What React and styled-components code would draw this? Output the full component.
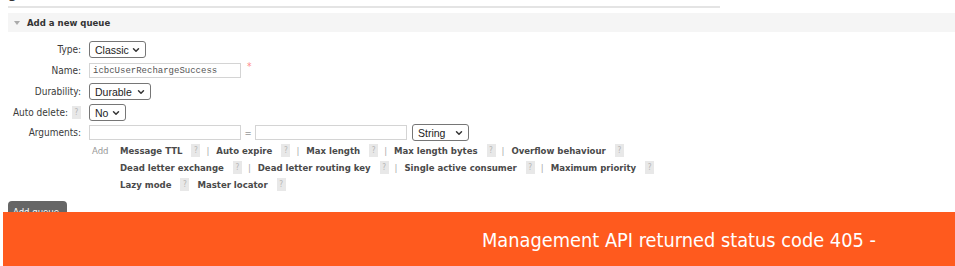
import React from "react";
import styled, { createGlobalStyle } from "styled-components";
import { ChevronDown } from "lucide-react";

const GlobalStyle = createGlobalStyle`
  html, body {
    margin: 0;
    padding: 0;
    background: #fff;
  }
  body {
    font-family: "DejaVu Sans", Verdana, sans-serif;
    font-stretch: condensed;
    font-size: 9.5px;
    color: #444;
    width: 955px;
    height: 266px;
    overflow: hidden;
    position: relative;
  }
`;

const TopStrip = styled.div`
  height: 6px;
  overflow: hidden;
  padding-left: 8px;
`;

const CutTitle = styled.div`
  font-size: 14px;
  font-weight: bold;
  color: #333;
  margin-top: -14px;
  line-height: 14px;
`;

const TopRule = styled.div`
  margin-left: 8px;
  width: 712px;
  height: 2px;
  background: #e4e4e4;
`;

const SectionHeader = styled.div`
  margin: 5px 0 0 8px;
  height: 19px;
  background: #f5f5f5;
  display: flex;
  align-items: center;
  padding-left: 6px;
  gap: 7px;
  font-weight: bold;
  font-size: 9.5px;
  color: #333;
`;

const Triangle = styled.span`
  width: 0;
  height: 0;
  border-left: 3.5px solid transparent;
  border-right: 3.5px solid transparent;
  border-top: 4px solid #aaa;
`;

const Form = styled.div`
  display: grid;
  grid-template-columns: 81px 1fr;
  grid-template-rows: repeat(4, 21px) 19px auto;
  column-gap: 8px;
  margin-top: 7px;
`;

const Label = styled.div`
  display: flex;
  align-items: center;
  justify-content: flex-end;
  gap: 4px;
  white-space: nowrap;
  font-size: 10px;
  color: #3a3a3a;
`;

const Field = styled.div`
  display: flex;
  align-items: center;
`;

const SelectBox = styled.div`
  box-sizing: border-box;
  width: ${(p) => p.$w}px;
  height: 17px;
  border: 1px solid #767676;
  border-radius: 3px;
  display: flex;
  align-items: center;
  justify-content: space-between;
  padding: 0 4px 0 5px;
  font-family: "Liberation Sans", Arial, sans-serif;
  font-stretch: normal;
  font-size: 10.5px;
  color: #222;
  background: #fff;
`;

const TextInput = styled.div`
  box-sizing: border-box;
  width: 152px;
  height: 15px;
  border: 1px solid #d4d4d4;
  display: flex;
  align-items: center;
  padding-left: 3px;
  font-family: "Liberation Mono", "Courier New", monospace;
  font-stretch: normal;
  font-size: 9px;
  color: #555;
  background: #fff;
`;

const Required = styled.span`
  color: #f88;
  margin-left: 6px;
  font-size: 10px;
  align-self: flex-start;
  margin-top: 1px;
`;

const Equals = styled.span`
  width: 14px;
  text-align: center;
  color: #666;
`;

const Help = styled.span`
  display: inline-flex;
  align-items: center;
  justify-content: center;
  width: 9px;
  height: 13px;
  background: #e8e8e8;
  color: #b5b5b5;
  font-size: 8px;
  font-weight: normal;
  margin-left: ${(p) => p.$ml ?? 9}px;
`;

const AddBlock = styled.div`
  grid-column: 2;
  display: flex;
`;

const AddLabel = styled.div`
  width: 28px;
  padding-left: 3px;
  color: #999;
  line-height: 17px;
`;

const Lines = styled.div`
  display: flex;
  flex-direction: column;
`;

const Line = styled.div`
  display: flex;
  align-items: center;
  height: 17px;
  white-space: nowrap;
`;

const Arg = styled.span`
  font-weight: bold;
  color: #4a4a4a;
  margin-left: ${(p) => p.$ml ?? 0}px;
`;

const Sep = styled.span`
  color: #aaa;
  margin: 0 7px 0 6px;
`;

const AddButton = styled.div`
  margin: 8px 0 0 8px;
  width: 59px;
  height: 22px;
  border-radius: 4px;
  background: #666;
  color: #fff;
  font-size: 9.5px;
  padding: 5px 0 0 5px;
  box-sizing: border-box;
`;

const Banner = styled.div`
  position: absolute;
  left: 3px;
  right: 0;
  top: 212px;
  height: 54px;
  background: #ff5a1e;
  color: #fff;
  font-size: 19.8px;
  line-height: 20px;
  padding: 19px 0 0 479px;
  box-sizing: border-box;
  white-space: nowrap;
`;

const Select = ({ w, children }) => (
  <SelectBox $w={w}>
    <span>{children}</span>
    <ChevronDown size={10} strokeWidth={3.5} color="#333" />
  </SelectBox>
);

const ArgLine = ({ items }) => (
  <Line>
    {items.map((it) => (
      <React.Fragment key={it.text}>
        <Arg $ml={it.gap}>{it.text}</Arg>
        <Help>?</Help>
        {it.sep && <Sep>|</Sep>}
      </React.Fragment>
    ))}
  </Line>
);

export default function App() {
  return (
    <>
      <GlobalStyle />
      <TopStrip>
        <CutTitle>g</CutTitle>
      </TopStrip>
      <TopRule />
      <SectionHeader>
        <Triangle />
        Add a new queue
      </SectionHeader>
      <Form>
        <Label>Type:</Label>
        <Field>
          <Select w={57}>Classic</Select>
        </Field>
        <Label>Name:</Label>
        <Field>
          <TextInput>icbcUserRechargeSuccess</TextInput>
          <Required>*</Required>
        </Field>
        <Label>Durability:</Label>
        <Field>
          <Select w={62}>Durable</Select>
        </Field>
        <Label>
          Auto delete:<Help $ml={0}>?</Help>
        </Label>
        <Field>
          <Select w={37}>No</Select>
        </Field>
        <Label>Arguments:</Label>
        <Field>
          <TextInput />
          <Equals>=</Equals>
          <TextInput />
          <span style={{ width: 5 }} />
          <Select w={57}>String</Select>
        </Field>
        <AddBlock>
          <AddLabel>Add</AddLabel>
          <Lines>
            <ArgLine
              items={[
                { text: "Message TTL", sep: true },
                { text: "Auto expire", sep: true },
                { text: "Max length", sep: true },
                { text: "Max length bytes", sep: true },
                { text: "Overflow behaviour" },
              ]}
            />
            <ArgLine
              items={[
                { text: "Dead letter exchange", sep: true },
                { text: "Dead letter routing key", sep: true },
                { text: "Single active consumer", sep: true },
                { text: "Maximum priority" },
              ]}
            />
            <ArgLine
              items={[
                { text: "Lazy mode" },
                { text: "Master locator", gap: 8 },
              ]}
            />
          </Lines>
        </AddBlock>
      </Form>
      <AddButton>Add queue</AddButton>
      <Banner>Management API returned status code 405 -</Banner>
    </>
  );
}
